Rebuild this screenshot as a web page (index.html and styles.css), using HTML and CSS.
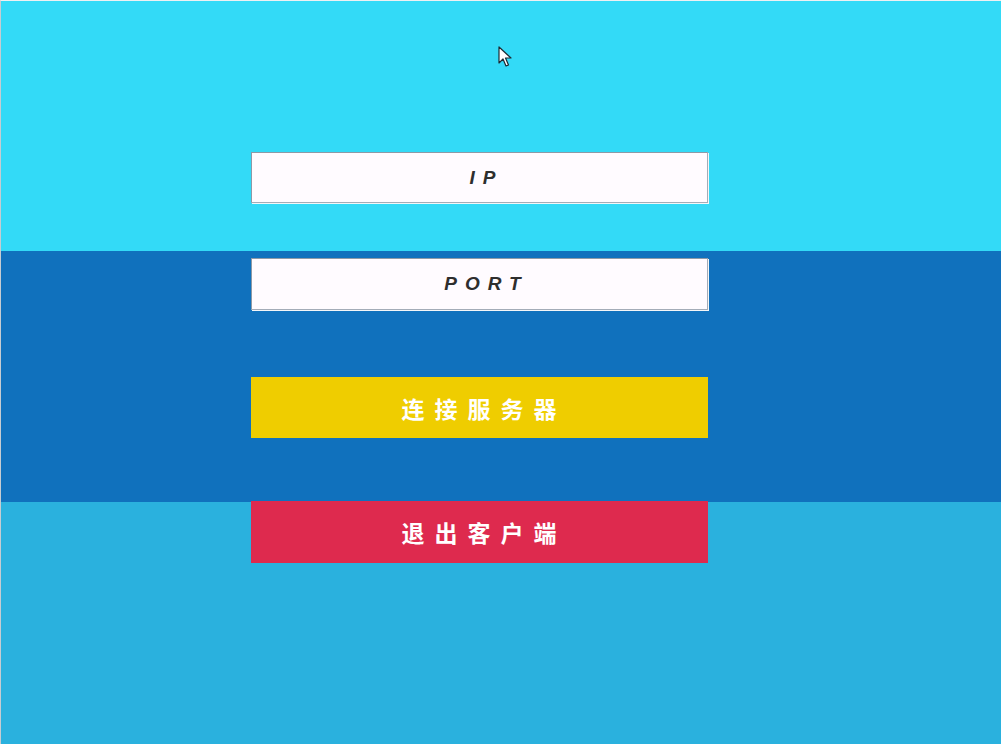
FILE: index.html
```html
<!DOCTYPE html>
<html lang="zh">
<head>
<meta charset="utf-8">
<title>客户端</title>
<link rel="stylesheet" href="styles.css">
</head>
<body>
<div class="window">
  <form class="panel">
    <div class="field field-ip"><span class="label">IP</span></div>
    <div class="field field-port"><span class="label">PORT</span></div>
    <button type="button" class="btn btn-connect">连接服务器</button>
    <button type="button" class="btn btn-exit">退出客户端</button>
  </form>
  <svg class="cursor" width="14" height="22" viewBox="0 0 14 22">
    <path d="M1 1 L1 17 L5 13 L8 20 L10.5 19 L7.5 12 L13 12 Z" fill="#fff" stroke="#1d2a33" stroke-width="1.2" stroke-linejoin="round"/>
  </svg>
</div>
</body>
</html>
```
FILE: styles.css
```css
html, body {
  margin: 0;
  padding: 0;
}
body {
  width: 1001px;
  height: 744px;
  overflow: hidden;
  font-family: "Liberation Sans", "Noto Sans CJK SC", sans-serif;
}
.window {
  position: relative;
  height: 743px;
  border-top: 1px solid #eef0f2;
  border-left: 1px solid #c6ccd2;
  background: linear-gradient(to bottom,
    #33daf7 0, #33daf7 250px,
    #1071bd 250px, #1071bd 501px,
    #2ab1de 501px, #2ab1de 100%);
}
.panel {
  display: flex;
  flex-direction: column;
  width: 457px;
  margin: 0 0 0 250px;
  padding-top: 151px;
}
.field {
  box-sizing: border-box;
  height: 51px;
  display: flex;
  align-items: center;
  justify-content: center;
  background: #fffbff;
  border: 1px solid #8e99a6;
  border-right-color: #a4acb8;
  border-bottom-color: #a4acb8;
  box-shadow: 1px 1px 0 #f4f6f8;
}
.field-port {
  margin-top: 55px;
  height: 52px;
}
.label {
  font-weight: bold;
  font-style: italic;
  font-size: 19px;
  letter-spacing: 8px;
  padding-left: 14px;
  color: #2e2e2e;
}
.btn {
  box-sizing: border-box;
  height: 61px;
  border: none;
  margin: 0;
  padding: 0 0 0 9px;
  font-family: "Noto Sans CJK SC", sans-serif;
  font-weight: bold;
  font-size: 23px;
  letter-spacing: 10px;
  color: #ffffff;
  text-align: center;
}
.btn-connect {
  margin-top: 67px;
  background: #efcd00;
}
.btn-exit {
  margin-top: 63px;
  height: 62px;
  background: #de2a4e;
}
.cursor {
  position: absolute;
  left: 497px;
  top: 45px;
}
```
